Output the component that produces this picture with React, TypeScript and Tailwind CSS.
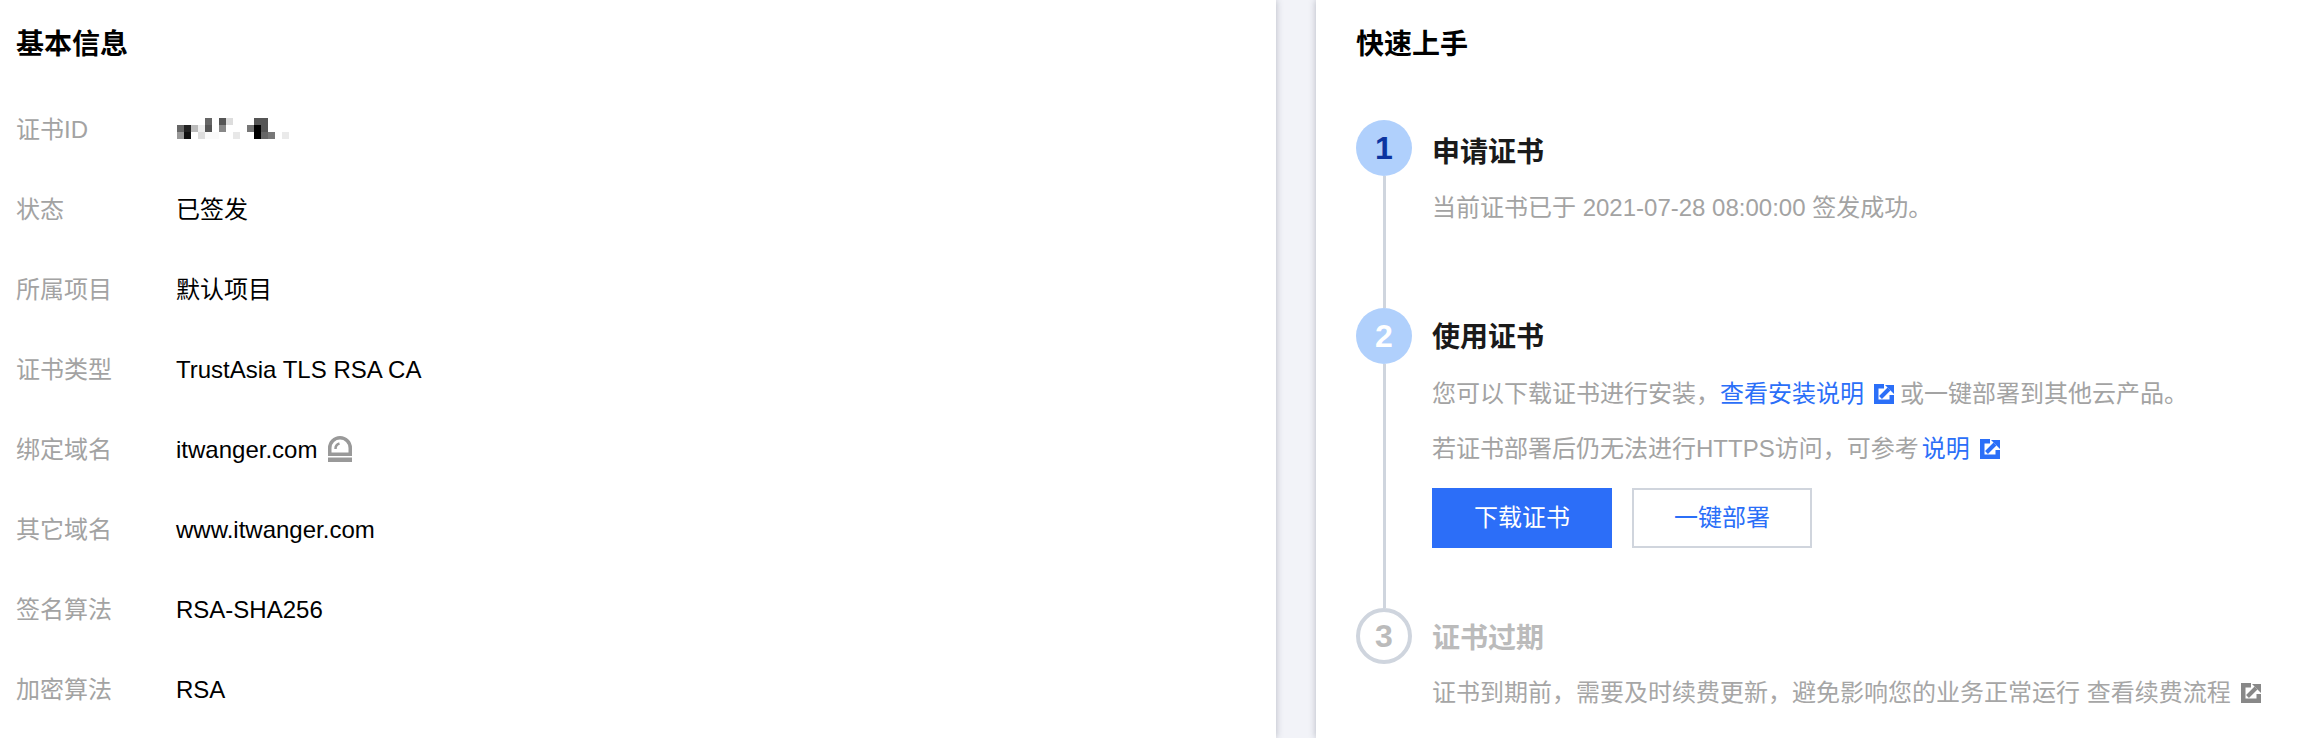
const ROWS: { label: string; value?: string }[] = [
  { label: '证书ID' },
  { label: '状态', value: '已签发' },
  { label: '所属项目', value: '默认项目' },
  { label: '证书类型', value: 'TrustAsia TLS RSA CA' },
  { label: '绑定域名', value: 'itwanger.com' },
  { label: '其它域名', value: 'www.itwanger.com' },
  { label: '签名算法', value: 'RSA-SHA256' },
  { label: '加密算法', value: 'RSA' },
];

// mosaic over the certificate id: [column, row, colour]
const MOSAIC: [number, number, string][] = [
  [4, 0, '#666'], [6, 0, '#555'], [7, 0, '#ddd'], [11, 0, '#555'], [12, 0, '#555'],
  [0, 1, '#666'], [1, 1, '#222'], [2, 1, '#bbb'], [3, 1, '#eee'], [4, 1, '#555'], [6, 1, '#888'], [10, 1, '#777'], [11, 1, '#000'], [12, 1, '#555'],
  [0, 2, '#999'], [1, 2, '#111'], [3, 2, '#ddd'], [4, 2, '#fafafa'], [5, 2, '#fafafa'], [8, 2, '#e8e8e8'], [11, 2, '#000'], [12, 2, '#666'], [13, 2, '#777'], [15, 2, '#eaeaea'],
];

function ExternalIcon({ className }: { className: string }) {
  return (
    <svg viewBox="0 0 20 20" className={`inline-block h-5 w-5 shrink-0 ${className}`} fill="currentColor">
      <path d="M0 0H10V4.5H4.5V15.5H15.5V11H20V20H0Z" />
      <path d="M11 1H20V10Z" />
      <path d="M6.5 13.5L15 5" stroke="currentColor" strokeWidth="4" />
    </svg>
  );
}

function SirenIcon() {
  return (
    <svg viewBox="0 0 24 26" className="mt-[-2px] ml-[11px] h-[26px] w-6" fill="none">
      <path d="M1.75 18.25V12a10.25 10.25 0 0 1 20.5 0v6.25z" stroke="#999" strokeWidth="3.5" />
      <path d="M7.5 13a5.5 5.5 0 0 1 4-5.5" stroke="#999" strokeWidth="2.5" />
      <rect x="0" y="21.5" width="24" height="4.5" fill="#999" />
    </svg>
  );
}

function StepMarker({ num, tone, last }: { num: string; tone: 'done' | 'active' | 'todo'; last?: boolean }) {
  return (
    <div className="flex w-14 shrink-0 flex-col items-center">
      {tone === 'done' && (
        <div className="flex h-14 w-14 items-center justify-center rounded-full bg-[#b0d0fc] text-[32px] font-bold text-[#0c34a0]">{num}</div>
      )}
      {tone === 'active' && (
        <div className="flex h-14 w-14 items-center justify-center rounded-full bg-[#b0d0fc] text-[32px] font-bold text-white">{num}</div>
      )}
      {tone === 'todo' && (
        <div className="flex h-14 w-14 items-center justify-center rounded-full border-4 border-[#cfd5de] text-[32px] font-bold text-[#bbbbbb]">{num}</div>
      )}
      {!last && <div className="w-[3px] flex-1 bg-[#cfd5de]" />}
    </div>
  );
}

export default function App() {
  return (
    <div className="flex h-[738px] w-[2310px] overflow-hidden bg-[#f2f3f8] text-[24px] leading-none [font-family:'Liberation_Sans','Noto_Sans_CJK_SC',sans-serif]">
      {/* 基本信息 */}
      <div className="relative z-10 w-[1276px] shrink-0 bg-white pl-4 shadow-[0_0_7px_rgba(40,45,70,0.3)]">
        <h2 className="flex h-[90px] items-center text-[28px] font-bold text-black">基本信息</h2>
        <div>
          {ROWS.map((row) => (
            <div key={row.label} className="flex h-20 items-center">
              <div className="w-40 text-[#a3a3a3]">{row.label}</div>
              {row.value ? (
                <div className="text-black">{row.value}</div>
              ) : (
                <svg viewBox="0 0 112 21" className="mt-[-3px] ml-[1px] h-[21px] w-[112px]">
                  {MOSAIC.map(([c, r, fill]) => (
                    <rect key={`${c}-${r}`} x={c * 7} y={r * 7} width="7" height="7" fill={fill} />
                  ))}
                </svg>
              )}
              {row.label === '绑定域名' && <SirenIcon />}
            </div>
          ))}
        </div>
      </div>

      <div className="w-10 shrink-0" />

      {/* 快速上手 */}
      <div className="relative z-10 flex-1 bg-white pl-10 shadow-[0_0_7px_rgba(40,45,70,0.3)]">
        <h2 className="flex h-[90px] items-center text-[28px] font-bold text-black">快速上手</h2>
        <div className="mt-[30px]">
          <div className="flex h-[188px] gap-5">
            <StepMarker num="1" tone="done" />
            <div>
              <div className="mt-[3px] flex h-[60px] items-center text-[28px] font-bold text-[#1a1a1a]">申请证书</div>
              <div className="mt-[7px] leading-[36px] text-[#a3a3a3]">当前证书已于 2021-07-28 08:00:00 签发成功。</div>
            </div>
          </div>
          <div className="flex h-[300px] gap-5">
            <StepMarker num="2" tone="active" />
            <div>
              <div className="flex h-[60px] items-center text-[28px] font-bold text-[#1a1a1a]">使用证书</div>
              <div className="mt-2 flex items-center leading-[36px] text-[#a3a3a3]">
                您可以下载证书进行安装，<span className="text-[#2b6ff8]">查看安装说明</span>
                <ExternalIcon className="mr-[6px] ml-[10px] text-[#2b6ff8]" />或一键部署到其他云产品。
              </div>
              <div className="mt-[19px] flex items-center leading-[36px] text-[#a3a3a3]">
                若证书部署后仍无法进行HTTPS访问，可参考 <span className="ml-[3px] text-[#2b6ff8]">说明</span>
                <ExternalIcon className="ml-[10px] text-[#2b6ff8]" />
              </div>
              <div className="mt-[21px] flex gap-5">
                <button className="h-[60px] w-[180px] bg-[#2c6ef8] text-white">下载证书</button>
                <button className="h-[60px] w-[180px] border-2 border-[#d0d5dd] bg-white text-[#2b6ff8]">一键部署</button>
              </div>
            </div>
          </div>
          <div className="flex gap-5">
            <StepMarker num="3" tone="todo" last />
            <div>
              <div className="mt-[1px] flex h-[60px] items-center text-[28px] font-bold text-[#bbbbbb]">证书过期</div>
              <div className="mt-[6px] flex items-center leading-[36px] text-[#a6a6a6]">
                证书到期前，需要及时续费更新，避免影响您的业务正常运行 查看续费流程
                <ExternalIcon className="ml-[10px] text-[#888888]" />
              </div>
            </div>
          </div>
        </div>
      </div>
    </div>
  );
}
